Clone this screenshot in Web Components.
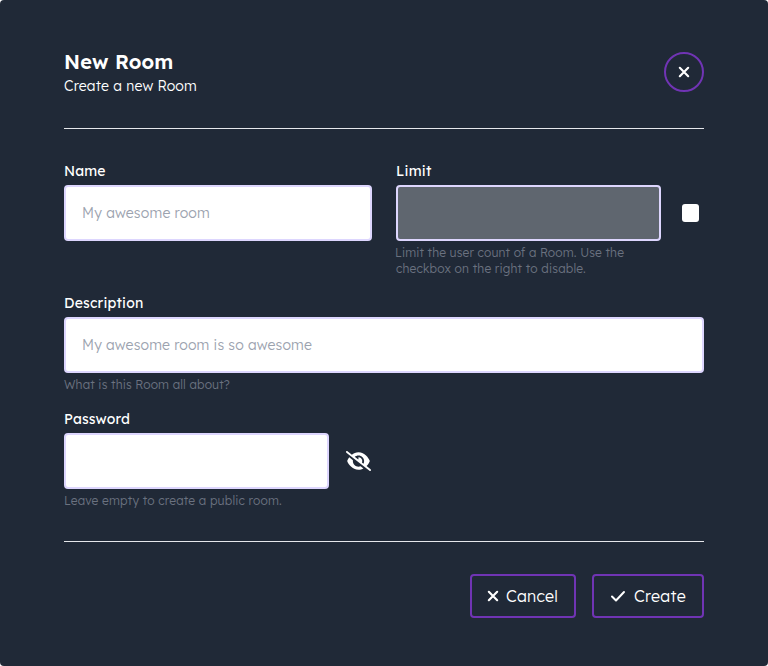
<!DOCTYPE html>
<html lang="en">
<head>
<meta charset="utf-8">
<title>New Room</title>
<style>
html { background: #fff; }
body { margin: 0; font-family: "Lexend Deca", Lexend, Inter, "Open Sans", sans-serif; font-weight: 350; color: #fff; }
</style>
</head>
<body>
<room-dialog></room-dialog>
<script>
const define = (name, html, ready) => {
  const template = document.createElement('template');
  template.innerHTML = html;
  customElements.define(name, class extends HTMLElement {
    connectedCallback() {
      if (this.shadowRoot) return;
      this.attachShadow({ mode: 'open' }).append(template.content.cloneNode(true));
      if (ready) ready(this);
    }
  });
};

const icons = {
  close: ['0 0 320 512', 10, 16, '<path d="M26 122 294 390M294 122 26 390" fill="none" stroke="currentColor" stroke-width="68" stroke-linecap="round"/>'],
  check: ['0 0 448 512', 14, 16, '<path d="M32 272 160 400 416 128" fill="none" stroke="currentColor" stroke-width="64" stroke-linecap="round" stroke-linejoin="round"/>'],
  hidden: ['0 0 640 512', 25, 20, '<path fill="currentColor" d="M38.8 5.1C28.4-3.1 13.3-1.2 5.1 9.2S-1.2 34.7 9.2 42.9l592 464c10.4 8.2 25.5 6.3 33.7-4.1s6.3-25.5-4.1-33.7L525.6 386.7c39.6-40.6 66.4-86.1 79.9-118.4c3.3-7.9 3.3-16.7 0-24.6c-14.9-35.7-46.2-87.7-93-131.1C465.5 68.8 400.8 32 320 32c-68.2 0-125 26.3-169.3 60.8L38.8 5.1zM223.1 149.5C248.6 126.2 282.7 112 320 112c79.5 0 144 64.5 144 144c0 24.9-6.3 48.3-17.4 68.7L408 294.5c8.4-19.3 10.6-41.4 4.8-63.3c-11.1-41.5-47.8-69.4-88.6-71.1c-5.8-.2-9.2 6.1-7.4 11.7c2.1 6.4 3.3 13.2 3.3 20.3c0 10.2-2.4 19.8-6.6 28.3l-90.3-70.8zM373 389.9c-16.4 6.5-34.3 10.1-53 10.1c-79.5 0-144-64.5-144-144c0-6.9 .5-13.6 1.4-20.2L83.1 161.5C60.3 191.2 44 220.8 34.5 243.7c-3.3 7.9-3.3 16.7 0 24.6c14.9 35.7 46.2 87.7 93 131.1C174.5 443.2 239.2 480 320 480c47.8 0 89.9-12.9 126.2-32.5L373 389.9z"/>']
};
define('ui-icon', `<style>
  :host { display: block; flex: none; } svg { display: block; overflow: visible; }
</style><div></div>`, el => {
  const [box, w, h, body] = icons[el.getAttribute('name')];
  el.shadowRoot.querySelector('div').innerHTML =
    `<svg viewBox="${box}" width="${w}" height="${h}">${body}</svg>`;
});

define('ui-button', `<style>
  :host { display: block; }
  button { all: unset; box-sizing: border-box; display: flex; align-items: center; gap: 8px;
    width: 100%; height: 44px; padding: 0 16px; border: 2px solid #7034b4; border-radius: 4px;
    font-size: 16px; line-height: 24px; cursor: pointer; }
  :host([round]) button { width: 40px; height: 40px; padding: 0; border-radius: 50%; justify-content: center; }
  :host([wide]) button { gap: 9px; padding-left: 17px; }
</style><button><slot></slot></button>`);

define('form-field', `<style>
  :host { display: block; min-width: 0; }
  .label { height: 20px; line-height: 20px; font-size: 14px; font-weight: 420; margin-bottom: 4px; }
  .row { display: flex; align-items: center; }
  .box { box-sizing: border-box; flex: 1; height: 56px; padding: 0 16px; line-height: 52px; font-size: 14px;
    background: #fff; color: #9ca3af; border: 2px solid #ddd6fe; border-radius: 4px; }
  :host([disabled]) .box { background: #5f666f; }
  .hint { font-size: 12px; line-height: 16px; color: #6b7280; margin-top: 4px; }
</style>
<div class="label"><slot name="label"></slot></div>
<div class="row"><div class="box"><slot></slot></div><slot name="side"></slot></div>
<div class="hint"><slot name="hint"></slot></div>`);

define('check-box', `<style>
  :host { display: block; width: 17px; height: 18px; margin: 0 5px 0 21px; background: #fff; border-radius: 3px; }
</style>`);

define('room-dialog', `<style>
  :host { display: block; box-sizing: border-box; height: 666px; padding: 48px 64px;
    background: #202937; border-radius: 4px; }
  header { display: flex; justify-content: space-between; align-items: center; height: 48px; }
  h1 { margin: 0; font-size: 20px; line-height: 28px; font-weight: 650; }
  p { margin: 0; font-size: 14px; line-height: 20px; }
  hr { margin: 32px 0; border: 0; height: 1px; background: #e5e7eb; }
  main { display: grid; grid-template-columns: 1fr 1fr; column-gap: 24px; row-gap: 16px; }
  .full { grid-column: 1 / -1; }
  .eye { margin: 0 1px 0 17px; }
  .secret { width: 308px; }
  .limit-hint { margin-left: -1px; }
  .indent { margin-left: 1px; }
  footer { display: flex; justify-content: flex-end; gap: 16px; }
  .cancel { width: 106px; } .create { width: 112px; }
</style>
<header>
  <div><h1><fit-text w="109.5">New Room</fit-text></h1><p><fit-text w="133">Create a new Room</fit-text></p></div>
  <ui-button round><ui-icon name="close"></ui-icon></ui-button>
</header>
<hr>
<main>
  <form-field><fit-text slot="label" w="41.5">Name</fit-text><fit-text w="128">My awesome room</fit-text></form-field>
  <form-field disabled><fit-text slot="label" w="35.5">Limit</fit-text>
    <check-box slot="side"></check-box>
    <div slot="hint" class="limit-hint"><fit-text w="229">Limit the user count of a Room. Use the</fit-text><br><fit-text class="indent" w="190">checkbox on the right to disable.</fit-text></div>
  </form-field>
  <form-field class="full"><fit-text slot="label" w="79.5">Description</fit-text><fit-text w="230">My awesome room is so awesome</fit-text>
    <fit-text slot="hint" w="166">What is this Room all about?</fit-text></form-field>
  <form-field class="secret"><fit-text slot="label" w="66">Password</fit-text>
    <ui-icon class="eye" slot="side" name="hidden"></ui-icon>
    <fit-text slot="hint" w="218">Leave empty to create a public room.</fit-text></form-field>
</main>
<hr>
<footer>
  <ui-button class="cancel"><ui-icon name="close"></ui-icon><fit-text w="52">Cancel</fit-text></ui-button>
  <ui-button class="create" wide><ui-icon name="check"></ui-icon><fit-text w="52">Create</fit-text></ui-button>
</footer>`);

/* One line of text, tracked so that it spans the width given in "w".
   Defined last, so that the elements around it already have their styles. */
define('fit-text', `<style>
  :host { display: inline-block; white-space: nowrap; }
</style><slot></slot>`, el => {
  const natural = el.getBoundingClientRect().width;
  const space = (Number(el.getAttribute('w')) - natural) / el.textContent.length;
  el.style.letterSpacing = space.toFixed(3) + 'px';
});
</script>
</body>
</html>
